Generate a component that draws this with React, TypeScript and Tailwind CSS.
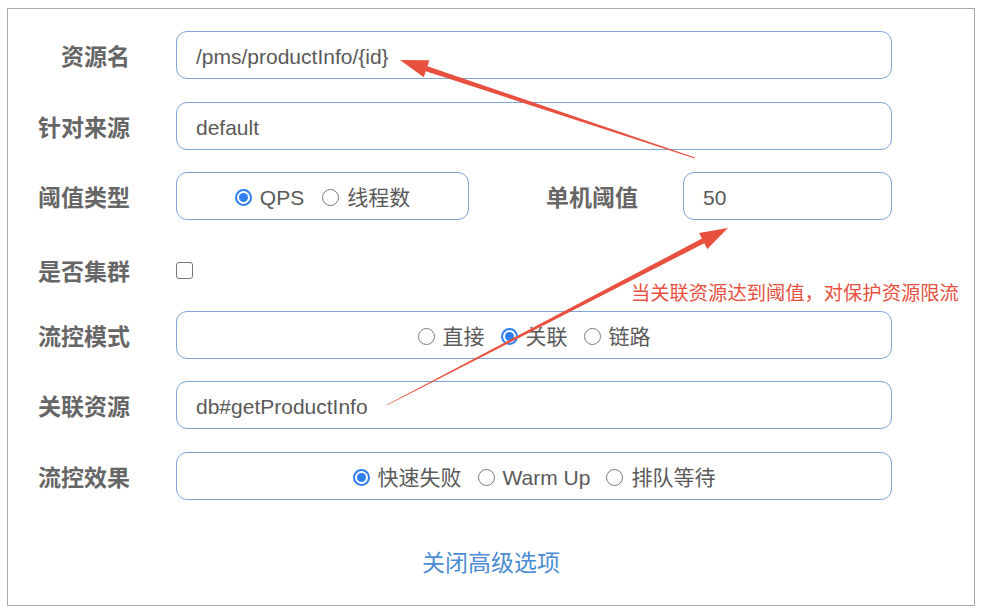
import React from 'react';

const FONT = { fontFamily: '"Liberation Sans", "Noto Sans CJK SC", sans-serif' };

type Pt = [number, number];

// tapered annotation arrow, thin at the tail, triangle head at the tip
function Arrow({ from, to }: { from: Pt; to: Pt }) {
  const dx = to[0] - from[0];
  const dy = to[1] - from[1];
  const len = Math.hypot(dx, dy);
  const ux = dx / len;
  const uy = dy / len;
  const nx = -uy;
  const ny = ux;
  const headLen = 28;
  const headW = 9;
  const shaftW = 2.6;
  const tailW = 0.4;
  const bx = to[0] - headLen * ux;
  const by = to[1] - headLen * uy;
  const pts: Pt[] = [
    [from[0] + tailW * nx, from[1] + tailW * ny],
    [bx + shaftW * nx, by + shaftW * ny],
    [bx + headW * nx, by + headW * ny],
    to,
    [bx - headW * nx, by - headW * ny],
    [bx - shaftW * nx, by - shaftW * ny],
    [from[0] - tailW * nx, from[1] - tailW * ny],
  ];
  return <polygon points={pts.map((p) => p.join(',')).join(' ')} fill="#e8513f" />;
}

function Radio({ checked, label }: { checked?: boolean; label: string }) {
  return (
    <span className="flex items-center gap-[8px]">
      {checked ? (
        <span className="w-[17px] h-[17px] rounded-full border-[2px] border-[#2f7ff0] flex items-center justify-center">
          <span className="w-[9px] h-[9px] rounded-full bg-[#2f7ff0]" />
        </span>
      ) : (
        <span className="w-[17px] h-[17px] rounded-full border border-[#7a7a7a]" />
      )}
      <span className="text-[21px] text-[#5a5a5a] leading-none">{label}</span>
    </span>
  );
}

function Label({ children }: { children: React.ReactNode }) {
  return (
    <div className="w-[122px] shrink-0 text-right text-[23px] font-bold text-[#666] leading-none pt-[4px]">
      {children}
    </div>
  );
}

function Box({ children, className = '' }: { children?: React.ReactNode; className?: string }) {
  return (
    <div
      className={`h-[48px] border border-[#7ea6d6] rounded-[11px] flex items-center pt-[3px] ${className}`}
    >
      {children}
    </div>
  );
}

export default function App() {
  return (
    <div className="relative w-[985px] h-[615px] bg-white overflow-hidden" style={FONT}>
      <div className="ml-[7px] mt-[8px] w-[968px] h-[598px] border border-[#a8a8a8] flex flex-col">
        {/* 资源名 */}
        <div className="flex items-center mt-[22px]">
          <Label>资源名</Label>
          <Box className="ml-[46px] w-[716px] pl-[19px]">
            <span className="text-[21px] text-[#5a5a5a]">/pms/productInfo/{'{id}'}</span>
          </Box>
        </div>

        {/* 针对来源 */}
        <div className="flex items-center mt-[23px]">
          <Label>针对来源</Label>
          <Box className="ml-[46px] w-[716px] pl-[19px]">
            <span className="text-[21px] text-[#5a5a5a]">default</span>
          </Box>
        </div>

        {/* 阈值类型 / 单机阈值 */}
        <div className="flex items-center mt-[22px]">
          <Label>阈值类型</Label>
          <Box className="ml-[46px] w-[293px] justify-center gap-[18px]">
            <Radio checked label="QPS" />
            <Radio label="线程数" />
          </Box>
          <div className="ml-[77px] w-[93px] text-[23px] font-bold text-[#666] leading-none pt-[4px]">单机阈值</div>
          <Box className="ml-[44px] w-[209px] pl-[19px]">
            <span className="text-[21px] text-[#5a5a5a]">50</span>
          </Box>
        </div>

        {/* 是否集群 */}
        <div className="flex items-center mt-[27px] h-[47px]">
          <Label>是否集群</Label>
          <span className="ml-[46px] w-[17px] h-[17px] rounded-[3px] border-[1.5px] border-[#777]" />
        </div>

        {/* 流控模式 */}
        <div className="flex items-center mt-[17px]">
          <Label>流控模式</Label>
          <Box className="ml-[46px] w-[716px] justify-center gap-[16px]">
            <Radio label="直接" />
            <Radio checked label="关联" />
            <Radio label="链路" />
          </Box>
        </div>

        {/* 关联资源 */}
        <div className="flex items-center mt-[22px]">
          <Label>关联资源</Label>
          <Box className="ml-[46px] w-[716px] pl-[19px]">
            <span className="text-[21px] text-[#5a5a5a]">db#getProductInfo</span>
          </Box>
        </div>

        {/* 流控效果 */}
        <div className="flex items-center mt-[23px]">
          <Label>流控效果</Label>
          <Box className="ml-[46px] w-[716px] justify-center gap-[16px]">
            <Radio checked label="快速失败" />
            <Radio label="Warm Up" />
            <Radio label="排队等待" />
          </Box>
        </div>

        <div className="mt-[48px] flex justify-center">
          <span className="text-[23px] text-[#4a8bd4] leading-[30px]">关闭高级选项</span>
        </div>
      </div>

      {/* annotations */}
      <div className="absolute left-[631px] top-[282px] text-[19.3px] text-[#e8513f] leading-[24px] whitespace-nowrap">
        当关联资源达到阈值，对保护资源限流
      </div>
      <svg className="absolute inset-0 pointer-events-none" width="985" height="615">
        <Arrow from={[695, 158]} to={[400, 60]} />
        <Arrow from={[387, 405]} to={[728, 228]} />
      </svg>
    </div>
  );
}
